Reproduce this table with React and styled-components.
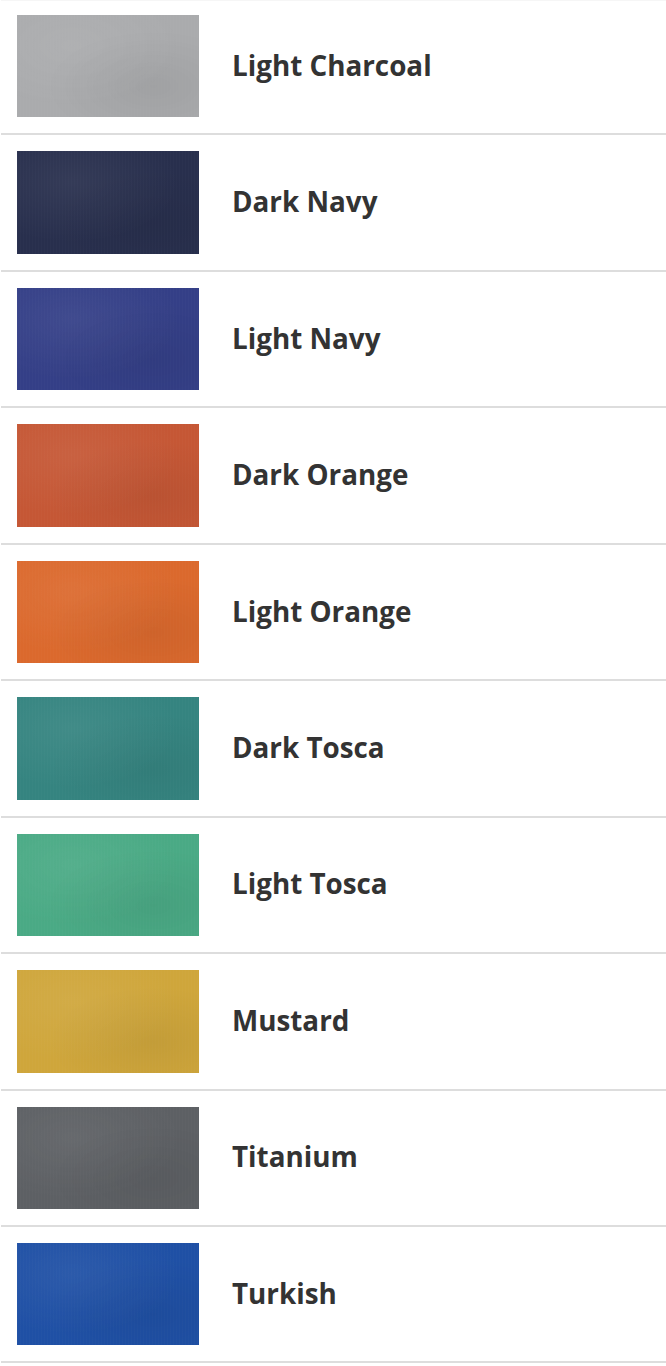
import React from "react";
import styled, { createGlobalStyle } from "styled-components";

const Global = createGlobalStyle`
  html, body { margin: 0; padding: 0; background: #fff; }
  body { font-family: "Open Sans", "Noto Sans", sans-serif; }
`;

const List = styled.ul`
  list-style: none;
  margin: 0 0 0 1px;
  padding: 0;
  border-top: 1px solid #f6f6f6;
`;

const Row = styled.li`
  display: flex;
  align-items: center;
  gap: 33px;
  padding: 16px 0 16px 16px;
  border-bottom: 2px solid #dddddd;
  &:first-child { padding-top: 14px; }
`;

const Swatch = styled.div`
  flex: 0 0 182px;
  width: 182px;
  height: 102.44px;
  background-color: ${(p) => p.$base};
  background-image:
    radial-gradient(ellipse at 30% 30%, rgba(255,255,255,0.06), transparent 60%),
    radial-gradient(ellipse at 75% 70%, rgba(0,0,0,0.06), transparent 55%),
    repeating-linear-gradient(90deg, rgba(255,255,255,0.015) 0 1px, transparent 1px 3px);
`;

const Name = styled.span`
  font-family: "Open Sans", "Noto Sans", sans-serif;
  font-weight: 700;
  font-size: 27.8px;
  line-height: 1;
  color: #333333;
  padding-bottom: 1px;
`;

const colors = [
  ["Light Charcoal", "#aaabad"],
  ["Dark Navy", "#282f4d"],
  ["Light Navy", "#343f87"],
  ["Dark Orange", "#c55735"],
  ["Light Orange", "#db692d"],
  ["Dark Tosca", "#358480"],
  ["Light Tosca", "#4aaa85"],
  ["Mustard", "#cfa63b"],
  ["Titanium", "#5d6064"],
  ["Turkish", "#1f50a5"],
];

export default function App() {
  return (
    <>
      <Global />
      <List>
        {colors.map(([name, c]) => (
          <Row key={name}>
            <Swatch $base={c} />
            <Name>{name}</Name>
          </Row>
        ))}
      </List>
    </>
  );
}
